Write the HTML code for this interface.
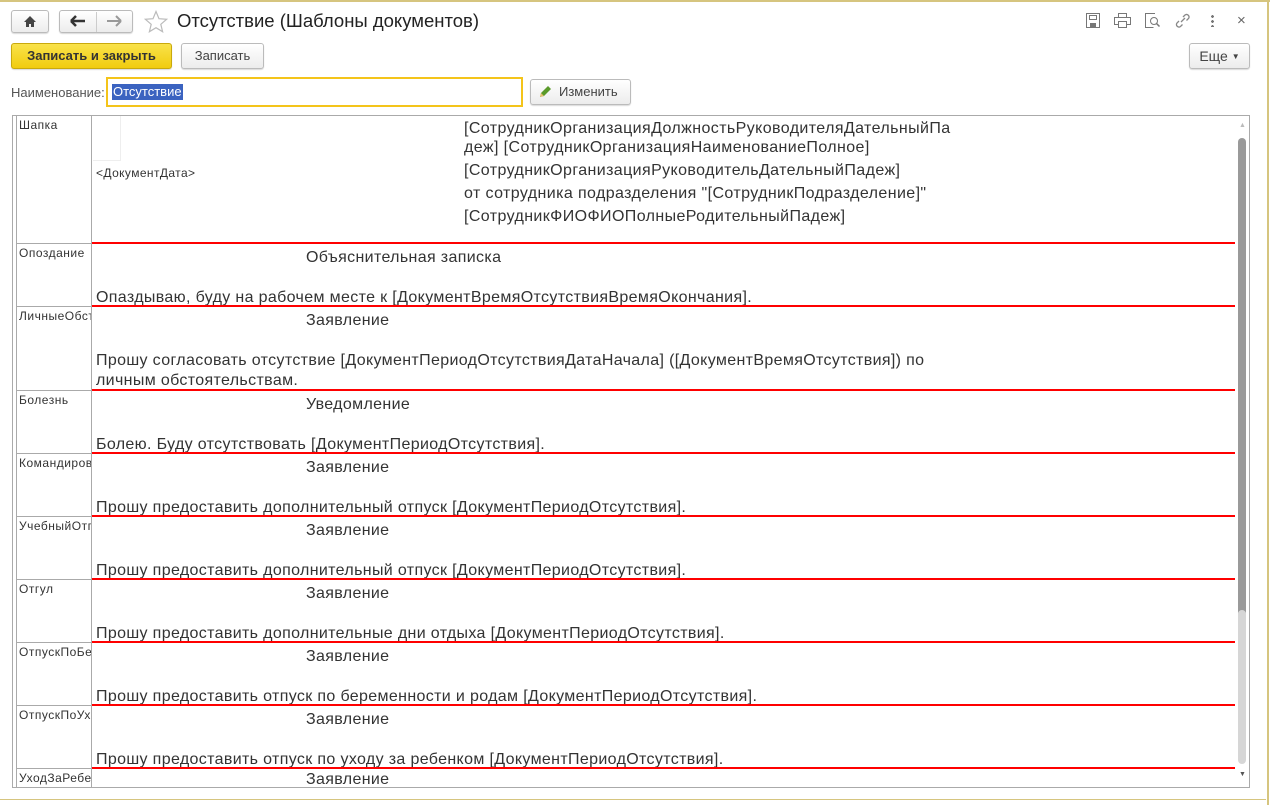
<!DOCTYPE html>
<html><head><meta charset="utf-8"><style>
*{margin:0;padding:0;box-sizing:border-box}
body{width:1270px;height:805px;background:#fff;font-family:"Liberation Sans",sans-serif;color:#333;position:relative;overflow:hidden}
.a{position:absolute;white-space:nowrap}
.btn{position:absolute;border:1px solid #bbb;border-radius:3px;background:linear-gradient(#fff,#ececec);box-shadow:0 1px 1px rgba(0,0,0,.15);font-size:13px;color:#444;text-align:center}
.t{position:absolute;font-size:16px;letter-spacing:0.35px;line-height:20px;white-space:nowrap;color:#333;margin-top:2px}
.lbl{position:absolute;left:19px;font-size:12px;letter-spacing:0.5px;color:#333;width:72px;overflow:hidden;white-space:nowrap}
.red{position:absolute;left:92px;width:1143px;height:2px;background:#f00}
.gl{position:absolute;left:16px;width:75px;height:1px;background:#aaa}
</style></head><body>
<div class="a" style="left:0;top:0;width:1270px;height:2px;background:#d6c57f"></div>
<div class="a" style="left:1267px;top:0;width:2px;height:805px;background:#d6c57f"></div>
<div class="a" style="left:0;top:799px;width:1266px;height:1px;background:#d6c57f"></div>

<div class="btn" style="left:11px;top:10px;width:38px;height:23px"><svg width="14" height="13" viewBox="0 0 14 13" style="margin-top:4px"><path d="M7 1L1 7h2v5h3V9h2v3h3V7h2z" fill="#444"/></svg></div>
<div class="btn" style="left:59px;top:10px;width:74px;height:23px"></div>
<div class="a" style="left:96px;top:12px;width:1px;height:20px;background:#ccc"></div>
<svg class="a" style="left:69px;top:15px" width="18" height="12"><path d="M2 6h14M2 6l5-5M2 6l5 5" stroke="#333" stroke-width="2.5" fill="none"/></svg>
<svg class="a" style="left:105px;top:15px" width="18" height="12"><path d="M2 6h13M16 6l-5-5M16 6l-5 5" stroke="#999" stroke-width="2" fill="none"/></svg>
<svg class="a" style="left:144px;top:10px" width="24" height="23"><path d="M12 1.5l3 7.2 7.6.6-5.8 5 1.8 7.4L12 17.7l-6.6 4 1.8-7.4-5.8-5 7.6-.6z" fill="none" stroke="#bbb" stroke-width="1.2"/></svg>
<div class="a" style="left:177px;top:10px;font-size:18.5px;color:#222">Отсутствие (Шаблоны документов)</div>

<svg class="a" style="left:1086px;top:13px" width="14" height="15"><rect x=".5" y=".5" width="13" height="14" fill="none" stroke="#777"/><rect x="3.5" y="2.5" width="7" height="4" fill="none" stroke="#777"/><rect x="4" y="10" width="6" height="4" fill="#777"/></svg>
<svg class="a" style="left:1114px;top:13px" width="17" height="15"><rect x="4.5" y=".5" width="8" height="4" fill="none" stroke="#777"/><rect x=".5" y="4.5" width="16" height="7" fill="none" stroke="#777"/><rect x="4.5" y="8.5" width="8" height="6" fill="#fff" stroke="#777"/></svg>
<svg class="a" style="left:1145px;top:13px" width="16" height="16"><path d="M10 .5H.5v14h8" fill="none" stroke="#777"/><circle cx="9" cy="8" r="3.5" fill="none" stroke="#777"/><path d="M11.5 10.5l3 3" stroke="#777" stroke-width="1.5"/></svg>
<svg class="a" style="left:1174px;top:12px" width="17" height="17"><path d="M7 10l4-4M5 9l-2 2a2.5 2.5 0 003.5 3.5l2-2M9 5l2-2a2.5 2.5 0 013.5 3.5l-2 2" fill="none" stroke="#888" stroke-width="1.3"/></svg>
<div class="a" style="left:1211px;top:14px;width:3px;height:13px;background:radial-gradient(circle,#777 1.3px,transparent 1.5px) 0 0/3px 5px"></div>
<div class="a" style="left:1237px;top:12px;font-size:15px;color:#666">×</div>

<div class="btn" style="left:11px;top:43px;width:161px;height:26px;background:linear-gradient(#f9e24a,#f1cc0f);border-color:#c9a90d;font-weight:bold;line-height:24px;color:#333">Записать и закрыть</div>
<div class="btn" style="left:181px;top:43px;width:83px;height:26px;line-height:24px">Записать</div>
<div class="btn" style="left:1189px;top:43px;width:61px;height:26px;line-height:24px;font-size:14px">Еще <span style="font-size:8px;vertical-align:2px">▼</span></div>

<div class="a" style="left:11px;top:85px;font-size:13px;color:#555">Наименование:</div>
<div class="a" style="left:106px;top:77px;width:417px;height:30px;border:2px solid #f4c41a;background:#fff"></div>
<div class="a" style="left:112px;top:84px;font-size:13px;color:#fff;background:#3b63c0;padding:0 1px;line-height:16px">Отсутствие</div>
<div class="btn" style="left:530px;top:79px;width:101px;height:26px;line-height:24px;font-size:13px;text-align:left;padding-left:28px">Изменить</div>
<svg class="a" style="left:538px;top:85px" width="14" height="14"><path d="M2 12l1-4 7-7 3 3-7 7z" fill="#5a9a2a"/><path d="M2 12l1-4 3 3z" fill="#e8c070"/></svg>

<div class="a" style="left:12px;top:115px;width:1238px;height:673px;border:1px solid #aaa"></div>
<div class="a" style="left:16px;top:116px;width:1px;height:671px;background:#aaa"></div>
<div class="a" style="left:91px;top:116px;width:1px;height:671px;background:#aaa"></div>
<div class="a" style="left:93px;top:116px;width:28px;height:45px;border-right:1px solid #eee;border-bottom:1px solid #eee"></div>
<div class="a" style="left:1238px;top:138px;width:8px;height:478px;background:#9a9a9a;border-radius:4px"></div>
<div class="a" style="left:1238px;top:610px;width:8px;height:154px;background:#d6d6d6;border-radius:4px"></div>
<div class="a" style="left:1239px;top:122px;font-size:7px;color:#bbb">▲</div>
<div class="a" style="left:1239px;top:771px;font-size:7px;color:#555">▼</div>

<div class="lbl" style="top:118px">Шапка</div>
<div class="a" style="left:96px;top:166px;font-size:12px;letter-spacing:0.4px">&lt;ДокументДата&gt;</div>
<div class="t" style="left:464px;top:117px;letter-spacing:0.4px">[СотрудникОрганизацияДолжностьРуководителяДательныйПа</div>
<div class="t" style="left:464px;top:136px;letter-spacing:0.4px">деж] [СотрудникОрганизацияНаименованиеПолное]</div>
<div class="t" style="left:464px;top:159px;letter-spacing:0.4px">[СотрудникОрганизацияРуководительДательныйПадеж]</div>
<div class="t" style="left:464px;top:182px;letter-spacing:0.4px">от сотрудника подразделения "[СотрудникПодразделение]"</div>
<div class="t" style="left:464px;top:205px;letter-spacing:0.4px">[СотрудникФИОФИОПолныеРодительныйПадеж]</div>

<div class="red" style="top:242px"></div><div class="gl" style="top:243px"></div>
<div class="lbl" style="top:246px">Опоздание</div>
<div class="t" style="left:306px;top:246px">Объяснительная записка</div>
<div class="t" style="left:96px;top:286px">Опаздываю, буду на рабочем месте к [ДокументВремяОтсутствияВремяОкончания].</div>

<div class="red" style="top:305px"></div><div class="gl" style="top:306px"></div>
<div class="lbl" style="top:309px">ЛичныеОбстоятельства</div>
<div class="t" style="left:306px;top:309px">Заявление</div>
<div class="t" style="left:96px;top:349px">Прошу согласовать отсутствие [ДокументПериодОтсутствияДатаНачала] ([ДокументВремяОтсутствия]) по</div>
<div class="t" style="left:96px;top:369px">личным обстоятельствам.</div>

<div class="red" style="top:389px"></div><div class="gl" style="top:390px"></div>
<div class="lbl" style="top:393px">Болезнь</div>
<div class="t" style="left:306px;top:393px">Уведомление</div>
<div class="t" style="left:96px;top:433px">Болею. Буду отсутствовать [ДокументПериодОтсутствия].</div>

<div class="red" style="top:452px"></div><div class="gl" style="top:453px"></div>
<div class="lbl" style="top:456px">Командировка</div>
<div class="t" style="left:306px;top:456px">Заявление</div>
<div class="t" style="left:96px;top:496px">Прошу предоставить дополнительный отпуск [ДокументПериодОтсутствия].</div>

<div class="red" style="top:515px"></div><div class="gl" style="top:516px"></div>
<div class="lbl" style="top:519px">УчебныйОтпуск</div>
<div class="t" style="left:306px;top:519px">Заявление</div>
<div class="t" style="left:96px;top:559px">Прошу предоставить дополнительный отпуск [ДокументПериодОтсутствия].</div>

<div class="red" style="top:578px"></div><div class="gl" style="top:579px"></div>
<div class="lbl" style="top:582px">Отгул</div>
<div class="t" style="left:306px;top:582px">Заявление</div>
<div class="t" style="left:96px;top:622px">Прошу предоставить дополнительные дни отдыха [ДокументПериодОтсутствия].</div>

<div class="red" style="top:641px"></div><div class="gl" style="top:642px"></div>
<div class="lbl" style="top:645px">ОтпускПоБеременности</div>
<div class="t" style="left:306px;top:645px">Заявление</div>
<div class="t" style="left:96px;top:685px">Прошу предоставить отпуск по беременности и родам [ДокументПериодОтсутствия].</div>

<div class="red" style="top:704px"></div><div class="gl" style="top:705px"></div>
<div class="lbl" style="top:708px">ОтпускПоУходу</div>
<div class="t" style="left:306px;top:708px">Заявление</div>
<div class="t" style="left:96px;top:748px">Прошу предоставить отпуск по уходу за ребенком [ДокументПериодОтсутствия].</div>

<div class="red" style="top:767px"></div><div class="gl" style="top:768px"></div>
<div class="lbl" style="top:771px">УходЗаРебенком</div>
<div class="t" style="left:306px;top:768px;height:17px;overflow:hidden">Заявление</div>
</body></html>
